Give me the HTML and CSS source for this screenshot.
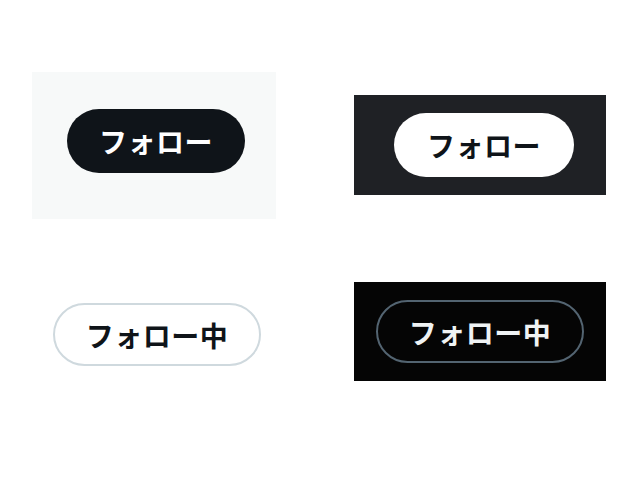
FILE: index.html
```html
<!DOCTYPE html>
<html lang="ja">
  <head>
    <meta charset="UTF-8" />
    <meta name="viewport" content="width=device-width, initial-scale=1.0" />
    <title>フォローボタン</title>
    <link rel="stylesheet" href="styles.css">
  </head>
  <body>
    <main class="board">
      <div class="panel light">
        <button class="btn solid-dark">フォロー</button>
      </div>
      <div class="panel dim">
        <button class="btn solid-light">フォロー</button>
      </div>
      <div class="plain">
        <button class="btn outline-light">フォロー中</button>
      </div>
      <div class="panel black">
        <button class="btn outline-dark">フォロー中</button>
      </div>
    </main>
  </body>
</html>
```

FILE: styles.css
```css
body {
  margin: 0;
  background-color: #fff;
  font-family: "Noto Sans CJK JP", "Noto Sans", sans-serif;
}

.board {
  display: grid;
  grid-template-columns: 244px 252px;
  grid-template-rows: 147px 99px;
  column-gap: 78px;
  row-gap: 63px;
  padding: 72px 0 0 32px;
}

.panel {
  display: flex;
  justify-content: center;
  align-items: center;
}
.panel.light {
  background-color: #f7f9f9;
}
.panel.dim {
  align-self: center;
  height: 100px;
  margin-top: -2px;
  background-color: #1f2125;
}
.panel.black {
  background-color: #050505;
}

.plain {
  display: flex;
  justify-content: center;
  align-items: center;
  padding: 6px 0 0 6px;
}

.btn {
  height: 64px;
  padding: 0;
  border-radius: 32px;
  border: none;
  font-family: inherit;
  font-size: 28px;
  font-weight: 700;
  letter-spacing: 0.5px;
  cursor: pointer;
}
.solid-dark {
  width: 178px;
  margin: 0 0 9px 4px;
  background-color: #0f1419;
  color: #fff;
}
.solid-light {
  width: 180px;
  margin: 0 0 0 8px;
  background-color: #fff;
  color: #0f1419;
}
.outline-light {
  width: 208px;
  height: 63px;
  background-color: #fff;
  color: #0f1419;
  border: 2px solid #cfd9de;
}
.outline-dark {
  width: 208px;
  height: 63px;
  background-color: transparent;
  color: #eff3f4;
  border: 2px solid #536471;
}
```
